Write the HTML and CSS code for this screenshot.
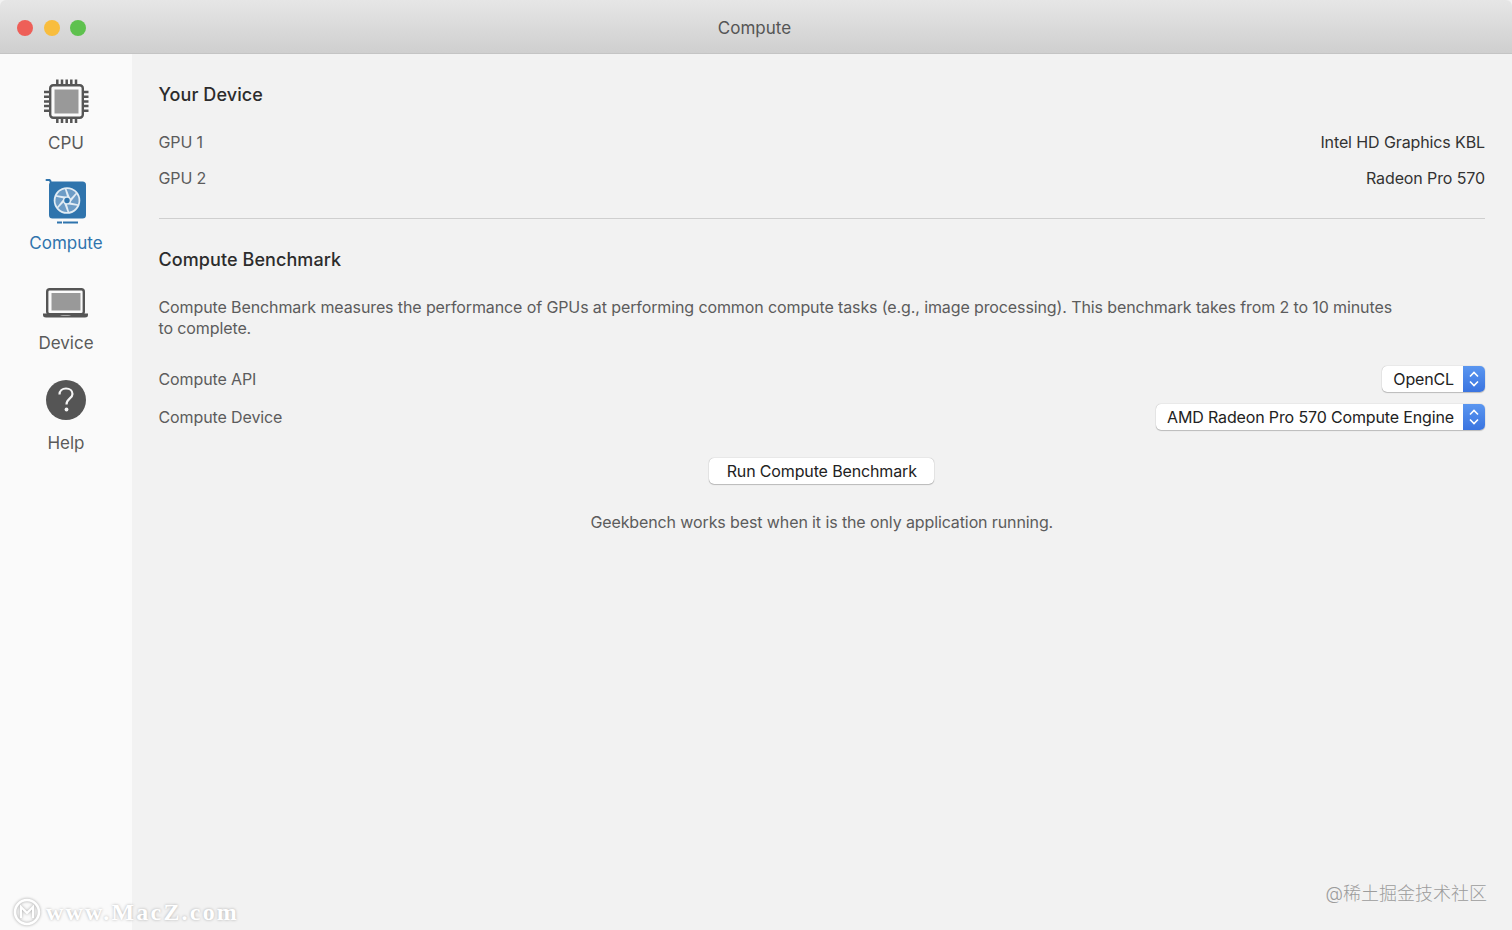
FILE: index.html
```html
<!DOCTYPE html>
<html lang="en">
<head>
<meta charset="utf-8">
<title>Compute</title>
<link rel="stylesheet" href="styles.css">
</head>
<body>
<div class="window">
  <header class="titlebar">
    <div class="lights"><span class="light red"></span><span class="light yellow"></span><span class="light green"></span></div>
    <div class="title">Compute</div>
  </header>
  <div class="main">
    <nav class="sidebar">
      <div class="nav-item">
        <svg class="nav-icon" viewBox="0 0 48 48">
          <path d="M15.300 1.500V45M20 1.500V45M24.700 1.500V45M29.300 1.500V45M34 1.500V45" fill="none" stroke="#555" stroke-width="2.500"/>
          <path d="M2 14H46.500M2 18.700H46.500M2 23.400H46.500M2 28.100H46.500M2 32.800H46.500" fill="none" stroke="#555" stroke-width="2.500"/>
          <rect x="8.200" y="7.200" width="32.600" height="32.600" rx="3" fill="#fafafa" stroke="#555" stroke-width="2.400"/>
          <rect x="12.500" y="11.500" width="24" height="24" fill="#999"/>
        </svg>
        <span class="nav-label">CPU</span>
      </div>
      <div class="nav-item active">
        <svg class="nav-icon" viewBox="0 0 48 48">
          <path d="M4.500 2H7.500Q8.500 2.500 9 5" stroke="#2f74ad" stroke-width="2" fill="none" stroke-linecap="round"/>
          <rect x="7" y="3.500" width="37" height="37" rx="3.500" fill="#2f74ad"/>
          <rect x="15" y="43.500" width="5" height="2" fill="#2f74ad"/>
          <rect x="21" y="43.500" width="15" height="2" fill="#2f74ad"/>
          <g transform="translate(25 22.500)">
            <circle r="13.300" fill="#e2ecf4"/>
            <g fill="#6d9cc6">
              <path d="M3.300-1.800L-.5-11.500A11.500 11.500 0 0 1 8.800-7.500Z"/>
              <path d="M3.300-1.800L-.5-11.500A11.500 11.500 0 0 1 8.800-7.500Z" transform="rotate(60)"/>
              <path d="M3.300-1.800L-.5-11.500A11.500 11.500 0 0 1 8.800-7.500Z" transform="rotate(120)"/>
              <path d="M3.300-1.800L-.5-11.500A11.500 11.500 0 0 1 8.800-7.500Z" transform="rotate(180)"/>
              <path d="M3.300-1.800L-.5-11.500A11.500 11.500 0 0 1 8.800-7.500Z" transform="rotate(240)"/>
              <path d="M3.300-1.800L-.5-11.500A11.500 11.500 0 0 1 8.800-7.500Z" transform="rotate(300)"/>
            </g>
            <circle r="4" fill="#e2ecf4"/>
            <circle r="2.700" fill="#2f74ad"/>
          </g>
        </svg>
        <span class="nav-label">Compute</span>
      </div>
      <div class="nav-item">
        <svg class="nav-icon" viewBox="0 0 48 48">
          <rect x="5.200" y="10.200" width="36.600" height="25" rx="2.500" fill="#fafafa" stroke="#555" stroke-width="2.400"/>
          <rect x="9.500" y="14" width="29" height="17.500" fill="#999"/>
          <path d="M1 34.500H17.500Q18 37 21 37H26Q29 37 29.500 34.500H46V36Q46 38.500 43 38.500H4Q1 38.500 1 36Z" fill="#555"/>
        </svg>
        <span class="nav-label">Device</span>
      </div>
      <div class="nav-item">
        <svg class="nav-icon" viewBox="0 0 48 48">
          <circle cx="24" cy="21" r="20" fill="#555"/>
          <path d="M17.500 15.500C17.500 11.500 20.500 9.500 24 9.500C27.800 9.500 30.500 11.800 30.500 15C30.500 19.500 24.500 19.500 24.500 25.500" fill="none" stroke="#f5f5f5" stroke-width="2.200"/>
          <circle cx="24.500" cy="30.500" r="1.900" fill="#f5f5f5"/>
        </svg>
        <span class="nav-label">Help</span>
      </div>
    </nav>
    <main class="content">
      <h2 class="heading first">Your Device</h2>
      <div class="row gpu"><span>GPU 1</span><span class="value">Intel HD Graphics KBL</span></div>
      <div class="row gpu"><span>GPU 2</span><span class="value">Radeon Pro 570</span></div>
      <hr class="rule">
      <h2 class="heading">Compute Benchmark</h2>
      <p class="desc">Compute Benchmark measures the performance of GPUs at performing common compute tasks (e.g., image processing). This benchmark takes from 2 to 10 minutes to complete.</p>
      <div class="row select-row">
        <span>Compute API</span>
        <div class="select"><span class="select-text">OpenCL</span><span class="stepper"><svg viewBox="0 0 22 26" width="22" height="26"><path d="M7 10.500L11 6.500L15 10.500M7 15.500L11 19.500L15 15.500" fill="none" stroke="#fff" stroke-width="1.600"/></svg></span></div>
      </div>
      <div class="row select-row">
        <span>Compute Device</span>
        <div class="select"><span class="select-text">AMD Radeon Pro 570 Compute Engine</span><span class="stepper"><svg viewBox="0 0 22 26" width="22" height="26"><path d="M7 10.500L11 6.500L15 10.500M7 15.500L11 19.500L15 15.500" fill="none" stroke="#fff" stroke-width="1.600"/></svg></span></div>
      </div>
      <div class="actions"><button class="run">Run Compute Benchmark</button></div>
      <p class="note">Geekbench works best when it is the only application running.</p>
    </main>
  </div>
  <div class="mark-left">
    <svg class="mark-logo" viewBox="0 0 28 28"><circle cx="14" cy="14" r="12" fill="none" stroke="#fff" stroke-width="2.500"/><path d="M8 20V9L14 15L20 9V20" fill="none" stroke="#fff" stroke-width="2"/></svg>
    <span>www.MacZ.com</span>
  </div>
  <div class="mark-right">@稀土掘金技术社区</div>
</div>
</body>
</html>
```
FILE: styles.css
```css
* { box-sizing: border-box; }
html, body { margin: 0; height: 100%; }
body {
  font-family: Inter, "Noto Sans CJK SC", sans-serif;
  font-size: 16px;
  letter-spacing: -0.11px;
  color: #555;
  background: #f2f2f2;
  overflow: hidden;
}
.window {
  position: relative;
  width: 1512px;
  height: 930px;
  display: flex;
  flex-direction: column;
  overflow: hidden;
}
.titlebar {
  position: relative;
  height: 54px;
  flex: none;
  display: flex;
  align-items: center;
  justify-content: center;
  background: linear-gradient(#e6e6e6, #cfcfcf);
  border-bottom: 1px solid #c4c4c4;
  border-radius: 6px 6px 0 0;
}
.lights {
  position: absolute;
  left: 17px;
  top: 19.500px;
  display: flex;
  gap: 10.500px;
}
.light { width: 16px; height: 16px; border-radius: 50%; }
.red { background: #ee5f58; }
.yellow { background: #f8bd3e; }
.green { background: #5ec14e; }
.title { font-size: 17px; color: #555; padding: 2px 3px 0 0; letter-spacing: 0; }
.main { flex: 1; display: flex; min-height: 0; }
.sidebar {
  width: 132px;
  flex: none;
  background: #fafafa;
  padding-top: 24px;
  display: flex;
  flex-direction: column;
}
.nav-item {
  height: 100.300px;
  display: flex;
  flex-direction: column;
  align-items: center;
}
.nav-icon { width: 48px; height: 48px; display: block; }
.nav-label { margin-top: 4.500px; font-size: 17px; line-height: 24px; letter-spacing: 0; color: #5a5a5a; }
.active .nav-label { color: #2f74ad; }
.content { flex: 1; min-width: 0; padding: 0 27px 0 26.500px; color: #5c5c5c; }
.heading {
  margin: 0;
  font-size: 18px;
  line-height: 24px;
  font-weight: 500;
  letter-spacing: .08px;
  color: #2c2c2c;
  padding-top: 29px;
}
.row { display: flex; justify-content: space-between; align-items: center; }
.gpu { height: 36px; }
.first + .gpu { margin-top: 17px; }
.value { color: #333; }
.rule { margin: 22px 0 0; border: 0; border-top: 1px solid #cfcfcf; }
.desc { margin: 25px 85px 0 0; line-height: 21px; }
.select-row { height: 38px; }
.desc + .select-row { margin-top: 21px; }
.select {
  display: flex;
  height: 26px;
  background: #fff;
  border-radius: 5px;
  box-shadow: 0 0 1px rgba(0,0,0,.35), 0 1px 1px rgba(0,0,0,.2);
  overflow: hidden;
  color: #222;
}
.select-text { padding: 0 9px 0 11px; line-height: 26px; letter-spacing: -0.14px; }
.stepper {
  width: 22px;
  background: linear-gradient(#5a96f0, #3a74e0);
  display: flex;
  align-items: center;
  justify-content: center;
}
.actions { display: flex; justify-content: center; margin-top: 22px; }
.run {
  width: 225px;
  height: 26px;
  padding: 0;
  border: 0;
  border-radius: 5px;
  background: #fff;
  box-shadow: 0 0 1px rgba(0,0,0,.4), 0 1px 1px rgba(0,0,0,.2);
  font: inherit;
  letter-spacing: -0.14px;
  color: #222;
}
.note { margin: 28px 0 0; text-align: center; line-height: 21px; }
.mark-left {
  position: absolute;
  left: 13px;
  top: 898px;
  display: flex;
  align-items: center;
  gap: 5px;
  color: #fff;
  font-family: "Liberation Serif", serif;
  font-size: 24px;
  font-weight: 700;
  letter-spacing: 2.200px;
  text-shadow: 0 0 3px rgba(0,0,0,.3);
}
.mark-logo { width: 28px; height: 28px; filter: drop-shadow(0 0 1.500px rgba(0,0,0,.35)); }
.mark-right {
  position: absolute;
  right: 25px;
  top: 883px;
  font-size: 18px;
  line-height: 22px;
  letter-spacing: 0;
  font-weight: 300;
  color: #9c9c9c;
}
```
